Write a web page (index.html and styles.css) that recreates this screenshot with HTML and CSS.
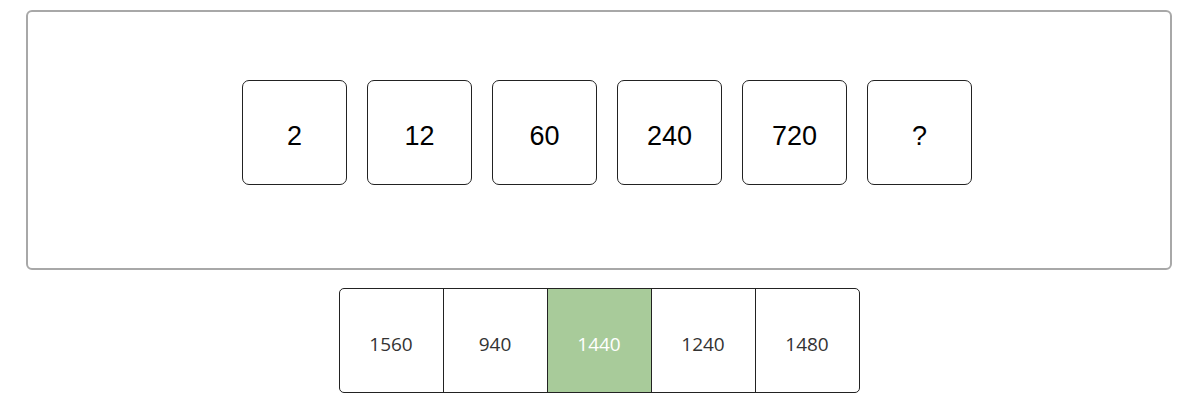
FILE: index.html
```html
<!DOCTYPE html>
<html>
<head>
<meta charset="utf-8">
<link rel="stylesheet" href="styles.css">
</head>
<body>
<div class="board">
  <div class="seq">
    <div class="card">2</div>
    <div class="card">12</div>
    <div class="card">60</div>
    <div class="card">240</div>
    <div class="card">720</div>
    <div class="card">?</div>
  </div>
</div>
<div class="options">
  <div class="opt">1560</div>
  <div class="opt">940</div>
  <div class="opt selected">1440</div>
  <div class="opt">1240</div>
  <div class="opt">1480</div>
</div>
</body>
</html>
```
FILE: styles.css
```css
html, body {
  margin: 0;
  background: #fff;
}
body {
  padding: 10px 28px 0 26px;
  font-family: "Liberation Sans", Arial, sans-serif;
}
.board {
  box-sizing: border-box;
  width: 1146px;
  height: 260px;
  border: 2px solid #a8a8a8;
  border-radius: 6px;
  padding: 68px 0 0 16px;
}
.seq {
  display: flex;
  justify-content: center;
  gap: 20px;
}
.card {
  box-sizing: border-box;
  width: 105px;
  height: 105px;
  padding-top: 8px;
  border: 1px solid #222;
  border-radius: 7px;
  display: flex;
  align-items: center;
  justify-content: center;
  font-size: 27px;
  color: #000;
}
.options {
  display: flex;
  width: 521px;
  box-sizing: border-box;
  margin: 18px auto 0;
  border: 1px solid #222;
  border-radius: 5px;
  overflow: hidden;
}
.opt {
  box-sizing: border-box;
  width: 103px;
  height: 103px;
  padding-top: 6px;
  display: flex;
  align-items: center;
  justify-content: center;
  font-family: "Open Sans", sans-serif;
  font-size: 19px;
  color: #333;
}
.opt + .opt {
  width: 104px;
  border-left: 1px solid #222;
}
.opt.selected {
  background: #a8cb9a;
  color: #fff;
}
```
